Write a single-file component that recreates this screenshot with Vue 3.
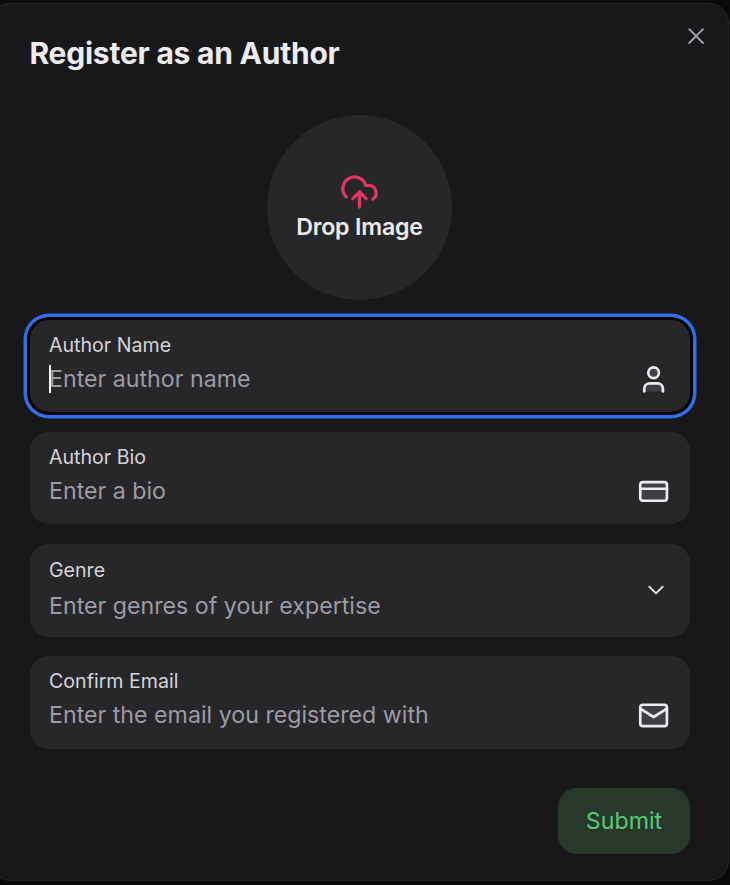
<script setup>
const fields = [
  { id: 'name', label: 'Author Name', placeholder: 'Enter author name', icon: 'user', focused: true },
  { id: 'bio', label: 'Author Bio', placeholder: 'Enter a bio', icon: 'card' },
  { id: 'genre', label: 'Genre', placeholder: 'Enter genres of your expertise', icon: 'chevron' },
  { id: 'email', label: 'Confirm Email', placeholder: 'Enter the email you registered with', icon: 'mail' },
]
</script>

<template>
  <main class="backdrop">
    <form class="modal" @submit.prevent>
      <header class="header">
        <h1 class="title">Register as an Author</h1>
        <button class="close" type="button" aria-label="Close">
          <svg width="22" height="22" viewBox="0 0 22 22" fill="none" stroke="currentColor" stroke-width="1.9" stroke-linecap="round">
            <path d="M4.2 4.2 18 18M18 4.2 4.2 18" />
          </svg>
        </button>
      </header>

      <button class="drop" type="button">
        <svg width="40" height="40" viewBox="0.3 0 24 24" fill="none" stroke="currentColor" stroke-width="2" stroke-linecap="round" stroke-linejoin="round">
          <path d="M4 14.899A7 7 0 1 1 15.71 8h1.79a4.5 4.5 0 0 1 2.5 8.242" />
          <path d="M12 12v9" />
          <path d="m16 16-4-4-4 4" />
        </svg>
        <span class="drop-text">Drop Image</span>
      </button>

      <div class="fields">
        <label v-for="f in fields" :key="f.id" class="field" :class="[f.id, { focused: f.focused }]">
          <span class="label">{{ f.label }}</span>
          <span class="entry">
            <span v-if="f.focused" class="caret"></span>
            <input class="input" :placeholder="f.placeholder" :readonly="f.id === 'genre'" />
          </span>
          <svg v-if="f.icon === 'chevron'" class="chevron" width="22" height="22" viewBox="0 0 22 22" fill="none" stroke="currentColor" stroke-width="1.9" stroke-linecap="round" stroke-linejoin="round">
            <path d="m4.3 7.7 6.7 6.7 6.7-6.7" />
          </svg>
          <svg v-else class="icon" width="32" height="32" viewBox="0.3 -0.3 24 24" stroke-width="2" stroke-linecap="round" stroke-linejoin="round">
            <template v-if="f.icon === 'user'">
              <path d="M19 21v-2a4 4 0 0 0-4-4H9a4 4 0 0 0-4 4v2" />
              <circle cx="12" cy="7" r="4" />
            </template>
            <template v-else-if="f.icon === 'card'">
              <rect x="2" y="5" width="20" height="14" rx="2" />
              <path d="M2 10h20" />
            </template>
            <template v-else>
              <rect x="2" y="4" width="20" height="16" rx="2" />
              <path d="m22 7-10 6.2L2 7" />
            </template>
          </svg>
        </label>
      </div>

      <footer class="footer">
        <button class="submit" type="submit">Submit</button>
      </footer>
    </form>
  </main>
</template>

<style>
body {
  margin: 0;
  background: #0a0909;
}
</style>

<style scoped>
.backdrop {
  box-sizing: border-box;
  width: 730px;
  height: 885px;
  padding-top: 3px;
  overflow: hidden;
  background: #0a0808;
  font-family: Inter, "Liberation Sans", sans-serif;
}
.modal {
  box-sizing: border-box;
  display: flex;
  flex-direction: column;
  width: 739px;
  height: 878px;
  margin-left: -10px;
  padding: 0 38px 0 39px;
  border: 1px solid #27272a;
  border-radius: 20px;
  background: #18181a;
}
button {
  border: 0;
  padding: 0;
  font: inherit;
}
.header {
  display: flex;
  justify-content: space-between;
  height: 111px;
  flex: none;
}
.title {
  margin: 30px 0 0 -0.5px;
  font-size: 30px;
  line-height: 38px;
  font-weight: 700;
  letter-spacing: -0.23px;
  white-space: nowrap;
  color: #ececef;
}
.close {
  width: 22px;
  height: 22px;
  margin: 21px -17px 0 0;
  background: none;
  color: #a1a1aa;
}
.close svg {
  display: block;
}
.drop {
  display: flex;
  flex: none;
  flex-direction: column;
  align-items: center;
  align-self: center;
  box-sizing: border-box;
  width: 185px;
  height: 185px;
  margin-right: 1px;
  padding-top: 57px;
  border-radius: 50%;
  background: #27272a;
  color: #e13661;
}
.drop svg {
  flex: none;
}
.drop-text {
  margin-top: -1px;
  font-size: 23.2px;
  line-height: 32px;
  font-weight: 600;
  letter-spacing: -0.2px;
  color: #ececef;
}
.fields {
  display: flex;
  flex-direction: column;
  gap: 20px;
  margin-top: 20px;
}
.field {
  display: grid;
  grid-template-columns: 1fr 32px;
  grid-template-rows: 27px 40px;
  box-sizing: border-box;
  height: 92px;
  padding: 12px 20.5px 0 19px;
  border-radius: 19px;
  background: #27272a;
}
.genre {
  height: 93px;
  padding-top: 13px;
  grid-template-rows: 28px 41px;
}
.email {
  height: 93px;
  margin-top: -1px;
}
.focused {
  box-shadow: 0 0 0 3px #000, 0 0 0 6.5px #2f6fe8;
}
.label {
  grid-column: 1 / 3;
  font-size: 19.6px;
  line-height: 27px;
  color: #d4d4d8;
}
.entry {
  display: flex;
  position: relative;
  align-items: center;
}
.input {
  width: 100%;
  padding: 0;
  border: 0;
  outline: 0;
  background: none;
  font: 400 23.2px/32px Inter, "Liberation Sans", sans-serif;
  color: #ececef;
}
.input::placeholder {
  color: #9b9ba4;
  opacity: 1;
}
.caret {
  position: absolute;
  left: 0;
  top: 6px;
  width: 2px;
  height: 28px;
  background: #f4f4f5;
}
.icon {
  align-self: center;
  fill: #3f3f46;
  stroke: #ececef;
}
.chevron {
  margin: -6px 0 0 7.5px;
  color: #ececef;
}
.footer {
  display: flex;
  justify-content: flex-end;
  margin-top: 39px;
}
.submit {
  width: 132px;
  height: 66px;
  border-radius: 19px;
  background: #26392b;
  color: #5cc873;
  font-size: 23.2px;
}
</style>
